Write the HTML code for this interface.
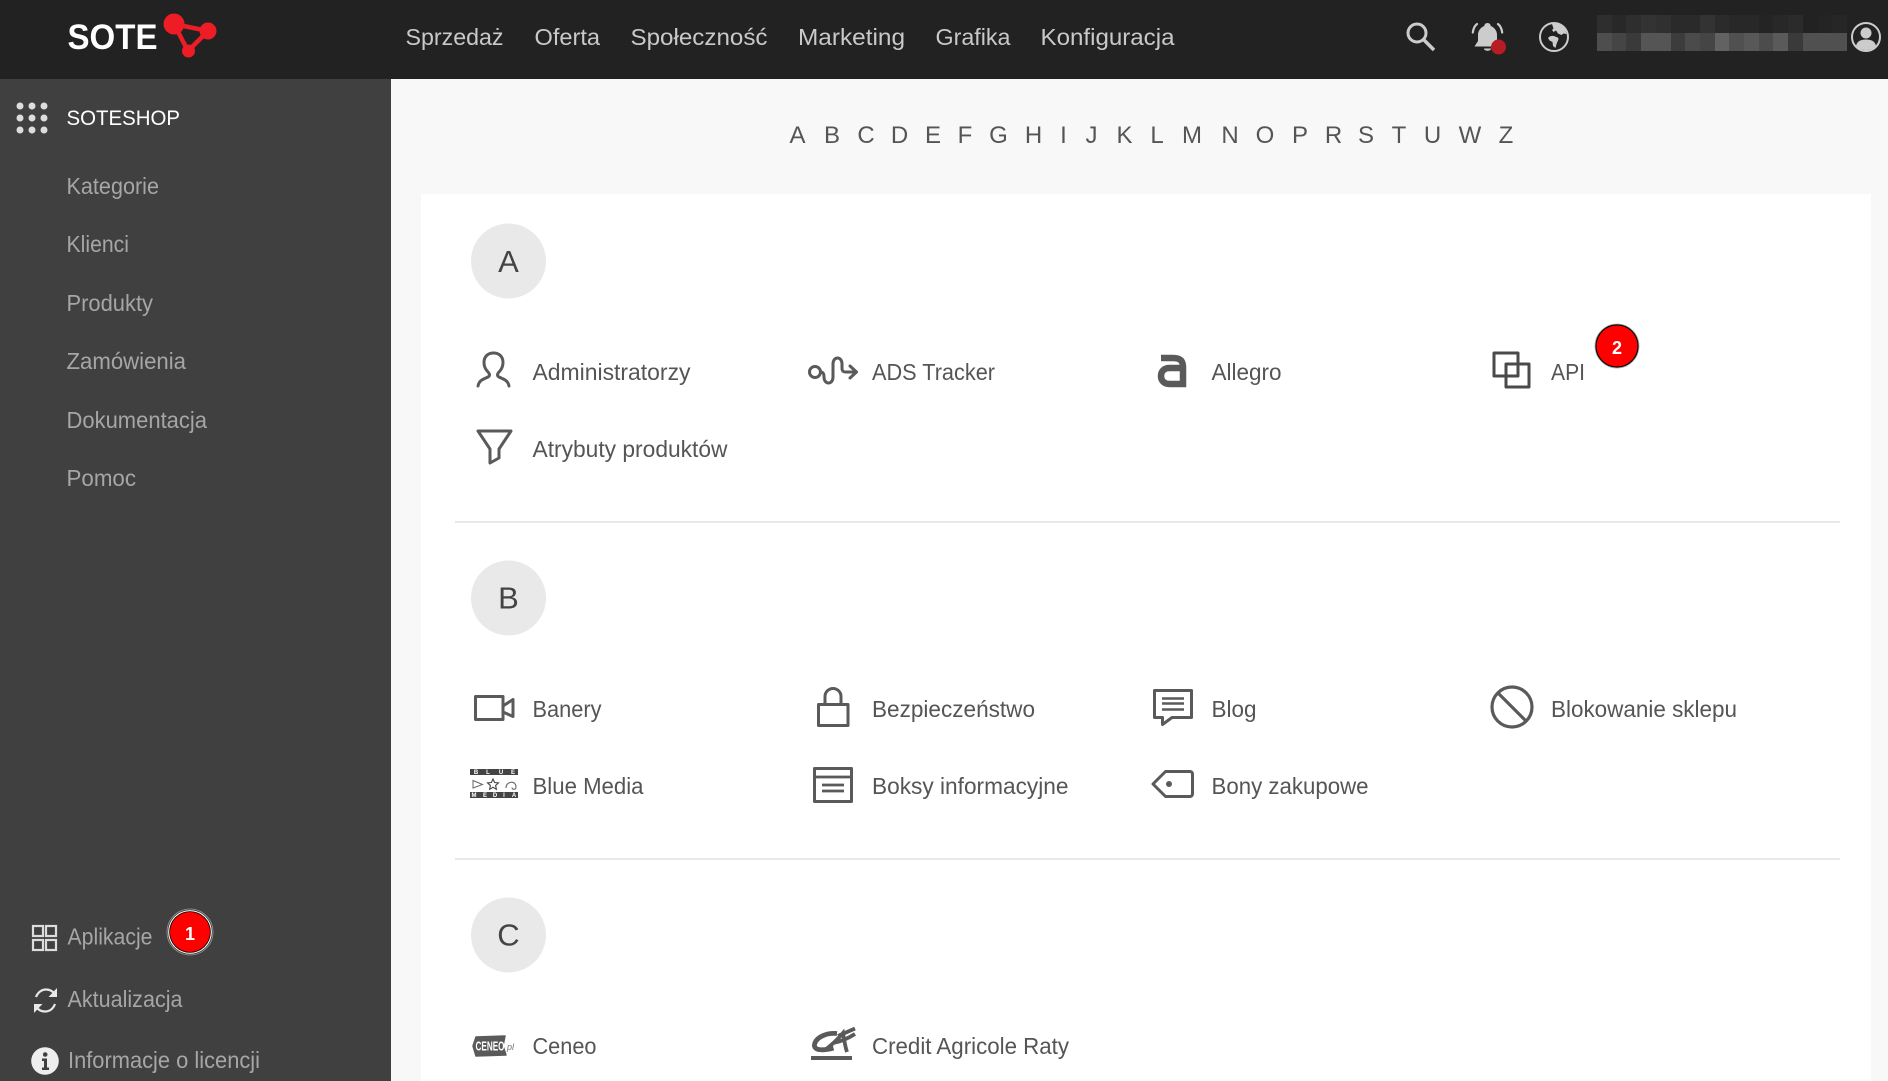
<!DOCTYPE html>
<html lang="pl">
<head>
<meta charset="utf-8">
<title>SOTESHOP</title>
<style>
html,body{margin:0;padding:0;width:1888px;height:1081px;overflow:hidden;background:#f8f8f8}
svg{position:absolute;left:0;top:0;display:block}
text{font-family:"Liberation Sans",sans-serif}
.nav{font-size:23.5px;fill:#c9c9c9}
.side{font-size:23.5px;fill:#a6a6a6}
.alpha{font-size:24px;fill:#555;text-anchor:middle}
.item{font-size:23.5px;fill:#555}
.big{font-size:31px;fill:#444;text-anchor:middle}
.ic{fill:none;stroke:#5a5a5a;stroke-width:3;stroke-linejoin:round;stroke-linecap:round}
.bm{font-size:6px;font-weight:bold;fill:#fff;text-anchor:middle}
</style>
</head>
<body>
<svg width="1888" height="1081" viewBox="0 0 1888 1081" xmlns="http://www.w3.org/2000/svg">
<!-- backgrounds -->
<rect width="1888" height="1081" fill="#f8f8f8"/>
<rect x="421" y="194" width="1450" height="887" fill="#fff"/>
<rect y="79" width="391" height="1002" fill="#404040"/>
<rect width="1888" height="79" fill="#222"/>

<!-- logo -->
<text x="67.500" y="49" font-size="35" font-weight="bold" fill="#fff" textLength="90" lengthAdjust="spacingAndGlyphs">SOTE</text>
<g fill="#ee1c25" stroke="#ee1c25">
<path d="M174 24 208 31 188 51Z" fill="none" stroke-width="4.5" stroke-linejoin="round"/>
<circle cx="174" cy="24" r="10.5" stroke="none"/>
<circle cx="208" cy="31" r="8.5" stroke="none"/>
<circle cx="188.500" cy="51" r="6.500" stroke="none"/>
</g>

<!-- top nav -->
<text class="nav" x="405.500" y="45" textLength="98" lengthAdjust="spacingAndGlyphs">Sprzedaż</text>
<text class="nav" x="534.500" y="45" textLength="65.500" lengthAdjust="spacingAndGlyphs">Oferta</text>
<text class="nav" x="630.500" y="45" textLength="137" lengthAdjust="spacingAndGlyphs">Społeczność</text>
<text class="nav" x="798" y="45" textLength="107" lengthAdjust="spacingAndGlyphs">Marketing</text>
<text class="nav" x="935.500" y="45" textLength="75" lengthAdjust="spacingAndGlyphs">Grafika</text>
<text class="nav" x="1040.500" y="45" textLength="134" lengthAdjust="spacingAndGlyphs">Konfiguracja</text>

<!-- top right icons -->
<g fill="none" stroke="#ccc" stroke-width="3">
<circle cx="1417" cy="33" r="9"/>
<path d="M1424 40 1434 50" stroke-width="3.5"/>
</g>
<path fill="#ccc" d="M1487.500 23c-2 0-3.200 1.500-3.200 3-4 1.500-6.300 5-6.300 9v6l-3.500 5.500h26l-3.500-5.500v-6c0-4-2.300-7.500-6.300-9 0-1.500-1.200-3-3.200-3zM1484 48.500h7c0 3-7 3-7 0z"/>
<path d="M1477 24c-2.500 2-3.700 4.500-4.200 8.500M1498 24c2.500 2 3.700 4.500 4.200 8.500" fill="none" stroke="#ccc" stroke-width="2.200" stroke-linecap="round"/>
<circle cx="1498.500" cy="47" r="7.500" fill="#b71c24"/>
<circle cx="1554" cy="37" r="14" fill="none" stroke="#ccc" stroke-width="2"/>
<path fill="#ccc" d="M1552 24c3-1 8-.5 11 2.500 2 2 3 5 3.500 7.500l-3-.5-2 1.500-3.500-1.500-2-3-2.500 1.500-1.500-2 1.500-1.500zM1549 37c2-1.500 5-1.500 7 0 2.500 0 3 2 2 3.500l-1.500 3.500-1 4-2.500-2-.5-4-3-1.500-1.500-2.500z"/>
<g>
<rect x="1597" y="15" width="250" height="18" fill="#2a2a2a"/>
<rect x="1597" y="33" width="250" height="18" fill="#4e4e4e"/>
<rect x="1597" y="15" width="15" height="18" fill="#2e2e2e"/><rect x="1612" y="15" width="14" height="18" fill="#282828"/><rect x="1626" y="15" width="15" height="18" fill="#2e2e2e"/><rect x="1641" y="15" width="15" height="18" fill="#333"/><rect x="1656" y="15" width="15" height="18" fill="#303030"/><rect x="1671" y="15" width="14" height="18" fill="#2a2a2a"/><rect x="1685" y="15" width="15" height="18" fill="#2a2a2a"/><rect x="1700" y="15" width="15" height="18" fill="#333"/><rect x="1715" y="15" width="14" height="18" fill="#2b2b2b"/><rect x="1729" y="15" width="15" height="18" fill="#282828"/><rect x="1744" y="15" width="15" height="18" fill="#282828"/><rect x="1759" y="15" width="14" height="18" fill="#242424"/><rect x="1773" y="15" width="15" height="18" fill="#282828"/><rect x="1788" y="15" width="15" height="18" fill="#2b2b2b"/><rect x="1803" y="15" width="15" height="18" fill="#222"/><rect x="1818" y="15" width="14" height="18" fill="#242424"/><rect x="1832" y="15" width="15" height="18" fill="#262626"/>
<rect x="1597" y="33" width="15" height="18" fill="#4e4e4e"/><rect x="1612" y="33" width="14" height="18" fill="#454545"/><rect x="1626" y="33" width="15" height="18" fill="#3a3a3a"/><rect x="1641" y="33" width="15" height="18" fill="#555"/><rect x="1656" y="33" width="15" height="18" fill="#555"/><rect x="1671" y="33" width="14" height="18" fill="#3c3c3c"/><rect x="1685" y="33" width="15" height="18" fill="#4b4b4b"/><rect x="1700" y="33" width="15" height="18" fill="#454545"/><rect x="1715" y="33" width="14" height="18" fill="#626262"/><rect x="1729" y="33" width="15" height="18" fill="#505050"/><rect x="1744" y="33" width="15" height="18" fill="#585858"/><rect x="1759" y="33" width="14" height="18" fill="#4c4c4c"/><rect x="1773" y="33" width="15" height="18" fill="#5a5a5a"/><rect x="1788" y="33" width="15" height="18" fill="#3a3a3a"/><rect x="1803" y="33" width="15" height="18" fill="#505050"/><rect x="1818" y="33" width="14" height="18" fill="#505050"/><rect x="1832" y="33" width="15" height="18" fill="#505050"/>
</g>
<circle cx="1866" cy="37" r="14" fill="none" stroke="#ccc" stroke-width="2"/>
<circle cx="1866" cy="33" r="5.500" fill="#ccc"/>
<path fill="#ccc" d="M1856 46c1-5 5-6.500 10-6.500s9 1.500 10 6.500c-2.500 2.700-6 4-10 4s-7.500-1.300-10-4z"/>

<!-- sidebar -->
<g fill="#ddd">
<circle cx="20" cy="106" r="3.500"/><circle cx="32" cy="106" r="3.500"/><circle cx="44" cy="106" r="3.500"/>
<circle cx="20" cy="118" r="3.500"/><circle cx="32" cy="118" r="3.500"/><circle cx="44" cy="118" r="3.500"/>
<circle cx="20" cy="130" r="3.500"/><circle cx="32" cy="130" r="3.500"/><circle cx="44" cy="130" r="3.500"/>
</g>
<text x="66.500" y="125" font-size="21.500" fill="#fff" textLength="113.500" lengthAdjust="spacingAndGlyphs">SOTESHOP</text>
<text class="side" x="66.500" y="194" textLength="92.500" lengthAdjust="spacingAndGlyphs">Kategorie</text>
<text class="side" x="66.500" y="252" textLength="62.500" lengthAdjust="spacingAndGlyphs">Klienci</text>
<text class="side" x="66.500" y="311" textLength="86.500" lengthAdjust="spacingAndGlyphs">Produkty</text>
<text class="side" x="66.500" y="369" textLength="119.500" lengthAdjust="spacingAndGlyphs">Zamówienia</text>
<text class="side" x="66.500" y="428" textLength="140.500" lengthAdjust="spacingAndGlyphs">Dokumentacja</text>
<text class="side" x="66.500" y="486" textLength="69.500" lengthAdjust="spacingAndGlyphs">Pomoc</text>

<g fill="none" stroke="#ddd" stroke-width="2.200">
<rect x="33" y="926" width="10" height="10"/><rect x="46" y="926" width="10" height="10"/>
<rect x="33" y="940" width="10" height="10"/><rect x="46" y="940" width="10" height="10"/>
</g>
<text class="side" x="67.500" y="944.500" textLength="85" lengthAdjust="spacingAndGlyphs">Aplikacje</text>
<circle cx="190" cy="932" r="23" fill="#404040" stroke="#999" stroke-width=".8"/>
<circle cx="190" cy="932" r="21.800" fill="#fff"/>
<circle cx="190" cy="932" r="20.800" fill="#000"/>
<circle cx="190" cy="932" r="20" fill="#f00"/>
<text x="190" y="940" font-size="18" font-weight="bold" fill="#fff" text-anchor="middle">1</text>

<g fill="none" stroke="#e8e8e8" stroke-width="2.200">
<path d="M36 997c2-5 6-7.500 10-7.500 3.500 0 6.500 1.500 9 4.500"/>
<path d="M55 1004c-2 5-5.500 7.500-10 7.500-3.500 0-6.500-1.500-9-4.500"/>
</g>
<path fill="#e8e8e8" d="M57 988v9h-8.500zM34 1013v-9h8.500z"/>
<text class="side" x="67.500" y="1007" textLength="115" lengthAdjust="spacingAndGlyphs">Aktualizacja</text>

<circle cx="45" cy="1061" r="13.800" fill="#eee"/>
<circle cx="45.200" cy="1054.500" r="2.300" fill="#404040"/>
<path d="M42 1058.500h5v9h2v2.500h-7v-2.500h2v-6.500h-2z" fill="#404040"/>
<text class="side" x="68" y="1068" textLength="192" lengthAdjust="spacingAndGlyphs">Informacje o licencji</text>

<!-- alphabet -->
<text class="alpha" x="797.500" y="143">A</text><text class="alpha" x="832" y="143">B</text><text class="alpha" x="866" y="143">C</text><text class="alpha" x="899.500" y="143">D</text><text class="alpha" x="933" y="143">E</text><text class="alpha" x="965" y="143">F</text><text class="alpha" x="998.500" y="143">G</text><text class="alpha" x="1033.500" y="143">H</text><text class="alpha" x="1063.500" y="143">I</text><text class="alpha" x="1091.500" y="143">J</text><text class="alpha" x="1124.500" y="143">K</text><text class="alpha" x="1157" y="143">L</text><text class="alpha" x="1192" y="143">M</text><text class="alpha" x="1230" y="143">N</text><text class="alpha" x="1265" y="143">O</text><text class="alpha" x="1300" y="143">P</text><text class="alpha" x="1333.500" y="143">R</text><text class="alpha" x="1366" y="143">S</text><text class="alpha" x="1399" y="143">T</text><text class="alpha" x="1432.500" y="143">U</text><text class="alpha" x="1470" y="143">W</text><text class="alpha" x="1506" y="143">Z</text>

<!-- section heads -->
<circle cx="508.500" cy="261" r="37.500" fill="#e9e9e9"/>
<text class="big" x="508.500" y="272">A</text>
<rect x="455" y="521" width="1385" height="2" fill="#e8e8e8"/>
<circle cx="508.500" cy="598" r="37.500" fill="#e9e9e9"/>
<text class="big" x="508.500" y="608.500">B</text>
<rect x="455" y="858" width="1385" height="2" fill="#e8e8e8"/>
<circle cx="508.500" cy="935" r="37.500" fill="#e9e9e9"/>
<text class="big" x="508.500" y="945.500">C</text>

<!-- section A -->
<path class="ic" d="M478 386c1-6 6-7 10-9 2-1 2-3 0-5-2-2-4-5.500-4-9.500 0-6 4-9.500 9.500-9.500s9.500 3.500 9.500 9.500c0 4-2 7.500-4 9.500-2 2-2 4 0 5 4 2 9 3 10 9"/>
<text class="item" x="532.500" y="380" textLength="158" lengthAdjust="spacingAndGlyphs">Administratorzy</text>

<circle class="ic" cx="815" cy="372" r="5.500"/>
<path class="ic" d="M820.500 372c3 0 3.500 2 3.500 5 0 8 9 8 9 0v-13c0-8 9-8 9 0v4c0 3 1 4 4 4h10M850 366l6.500 6-6.500 6"/>
<text class="item" x="872" y="380" textLength="123" lengthAdjust="spacingAndGlyphs">ADS Tracker</text>

<path d="M1161 358h12c7.500 0 10 3 10 9v17h-13.500c-5 0-8.500-3-8.500-8s3.500-8 8.500-8h13.500" fill="none" stroke="#5a5a5a" stroke-width="6.500"/>
<text class="item" x="1211.500" y="380" textLength="70" lengthAdjust="spacingAndGlyphs">Allegro</text>

<g fill="none" stroke="#4a4a4a" stroke-width="3" stroke-linejoin="round">
<rect x="1494" y="353" width="24" height="23"/>
<rect x="1506" y="364" width="23" height="23"/>
</g>
<text class="item" x="1551" y="380" textLength="34" lengthAdjust="spacingAndGlyphs">API</text>
<circle cx="1617" cy="346" r="22" fill="#000" stroke="#aaa" stroke-width=".8"/>
<circle cx="1617" cy="346" r="20.500" fill="#f00"/>
<text x="1617" y="354" font-size="18" font-weight="bold" fill="#fff" text-anchor="middle">2</text>

<path class="ic" d="M478 431H511L499 449V458L490 463V449Z"/>
<text class="item" x="532.500" y="457" textLength="195" lengthAdjust="spacingAndGlyphs">Atrybuty produktów</text>

<!-- section B -->
<path class="ic" d="M475.500 696.500H503V719.500H475.500ZM503 706L513 699.500V716.500L503 712"/>
<text class="item" x="532.500" y="717" textLength="69" lengthAdjust="spacingAndGlyphs">Banery</text>

<path class="ic" d="M818.500 704.500H848V725.500H818.500ZM825 704.500V696.500a8 8 0 0 1 16 0v8"/>
<text class="item" x="872" y="717" textLength="163" lengthAdjust="spacingAndGlyphs">Bezpieczeństwo</text>

<path class="ic" d="M1154.500 690.500H1191.500V717.500H1172L1162.500 724.500V717.500H1154.500Z"/>
<path d="M1162 698.500h22M1162 703.500h22M1162 709.500h22" stroke="#5a5a5a" stroke-width="2.600"/>
<text class="item" x="1211.500" y="717" textLength="45" lengthAdjust="spacingAndGlyphs">Blog</text>

<circle cx="1512" cy="707" r="20" fill="none" stroke="#5a5a5a" stroke-width="3.200"/>
<path d="M1498 693 1526 721" stroke="#5a5a5a" stroke-width="3.200"/>
<text class="item" x="1551" y="717" textLength="186" lengthAdjust="spacingAndGlyphs">Blokowanie sklepu</text>

<!-- Blue Media logo -->
<rect x="470" y="769" width="48" height="6" fill="#444"/>
<rect x="470" y="792" width="48" height="6" fill="#444"/>
<text class="bm" x="476" y="774">B</text><text class="bm" x="488" y="774">L</text><text class="bm" x="501" y="774">U</text><text class="bm" x="513" y="774">E</text>
<text class="bm" x="474" y="797">M</text><text class="bm" x="485" y="797">E</text><text class="bm" x="495" y="797">D</text><text class="bm" x="504" y="797">I</text><text class="bm" x="514" y="797">A</text>
<path d="M473 780.500 482.500 784.500 473 788Z" fill="none" stroke="#666" stroke-width="1"/>
<path d="M493 779l1.600 3.500 3.900.400-2.900 2.600.800 3.800-3.400-2-3.400 2 .800-3.800-2.900-2.600 3.900-.400z" fill="none" stroke="#444" stroke-width="1.100"/>
<path d="M506 788c0-7 10-8 10-1 0 3-4 3-4 .500" fill="none" stroke="#666" stroke-width="1.100"/>
<text class="item" x="532.500" y="794" textLength="111" lengthAdjust="spacingAndGlyphs">Blue Media</text>

<rect x="814.500" y="768.500" width="37" height="33" fill="none" stroke="#5a5a5a" stroke-width="3" stroke-linejoin="round"/>
<path d="M814 777h38M822 785h22M822 791h22" stroke="#5a5a5a" stroke-width="2.800"/>
<text class="item" x="872" y="794" textLength="196.500" lengthAdjust="spacingAndGlyphs">Boksy informacyjne</text>

<path class="ic" d="M1153 784 1165.500 771.500H1190a2.500 2.500 0 0 1 2.500 2.500V794a2.500 2.500 0 0 1-2.500 2.500H1165.500Z"/>
<circle cx="1169" cy="784" r="3" fill="#5a5a5a"/>
<text class="item" x="1211.500" y="794" textLength="157" lengthAdjust="spacingAndGlyphs">Bony zakupowe</text>

<!-- section C -->
<path d="M476 1037 505 1036 503 1046 506 1055 476 1056 473 1046Z" fill="#5a5a5a" stroke="#5a5a5a" stroke-width="1.500" stroke-linejoin="round"/>
<text x="475.500" y="1050.500" font-size="13" font-weight="bold" fill="#fff" textLength="29" lengthAdjust="spacingAndGlyphs">CENEO</text>
<text x="507" y="1050" font-size="9" font-style="italic" fill="#777">pl</text>
<text class="item" x="532.500" y="1054" textLength="64" lengthAdjust="spacingAndGlyphs">Ceneo</text>

<rect x="811" y="1056" width="41" height="4" fill="#5a5a5a"/>
<path d="M837 1033.500c-10-1-21 3.500-22.500 11-1 6 8 6.500 19 3.500" fill="none" stroke="#5a5a5a" stroke-width="4.800"/>
<path d="M825 1050c8-6 13-11 18-17 1 6 2 13 4 19M833 1043c6-1 14-4 22-9M838 1036l17-7.500" fill="none" stroke="#5a5a5a" stroke-width="3.800"/>
<text class="item" x="872" y="1054" textLength="197" lengthAdjust="spacingAndGlyphs">Credit Agricole Raty</text>
</svg>
</body>
</html>
